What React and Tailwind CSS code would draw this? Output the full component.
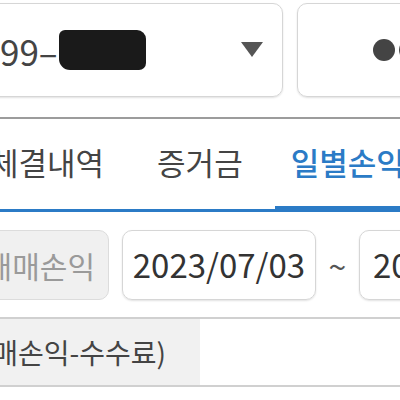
import React from "react";

const font = { fontFamily: '"Noto Sans CJK KR", "Noto Sans", sans-serif' };

function Triangle() {
  return (
    <svg width="22" height="16" viewBox="0 0 22 16" className="shrink-0">
      <polygon points="0,0 22,0 11,15" fill="#555555" />
    </svg>
  );
}

export default function App() {
  return (
    <div
      className="w-[400px] h-[400px] overflow-hidden bg-white text-[#444]"
      style={font}
    >
      {/* account selector row */}
      <div className="flex pt-[3px] gap-[14px]">
        <div className="-ml-[20px] w-[303px] h-[94px] shrink-0 flex items-center border border-[#d6d6d6] rounded-[10px] shadow-[0_1px_2px_rgba(0,0,0,0.12)] pl-[19px] pr-[19px]">
          <div className="flex-1 flex items-center">
            <span className="text-[35px] leading-none whitespace-nowrap">99–</span>
            <span className="inline-block w-[87px] h-[40px] bg-[#1a1a1a] rounded-[6px_9px_7px_11px] ml-[1px] shrink-0" />
          </div>
          <Triangle />
        </div>
        <div className="w-[200px] h-[94px] shrink-0 flex items-center gap-[4px] pl-[75px] border border-[#d6d6d6] rounded-[10px] shadow-[0_1px_2px_rgba(0,0,0,0.12)]">
          <span className="w-[22px] h-[22px] rounded-full bg-[#444] shrink-0" />
          <span className="w-[22px] h-[22px] rounded-full bg-[#444] shrink-0" />
        </div>
      </div>

      <div className="mt-[20px] h-[2px] bg-[#9c9c9c]" />

      {/* tabs */}
      <div className="flex items-center h-[87px] -ml-[10px] text-[31px] whitespace-nowrap">
        <span className="text-[#444]">체결내역</span>
        <span className="ml-[53px] text-[#444]">증거금</span>
        <span className="ml-[48px] text-[#2b7bc6] font-medium">일별손익</span>
      </div>
      <div className="flex items-end">
        <div className="w-[275px] h-[3px] bg-[#2b7bc6]" />
        <div className="flex-1 h-[6px] bg-[#2b7bc6]" />
      </div>

      {/* date filter row */}
      <div className="flex items-center mt-[18px] h-[70px] whitespace-nowrap">
        <div className="-ml-[20px] w-[129px] h-[70px] shrink-0 flex items-center justify-end pr-[13px] overflow-hidden bg-[#f0f0f0] border border-[#dcdcdc] rounded-[10px] text-[30px] text-[#9a9a9a]">
          매매손익
        </div>
        <div className="ml-[13px] w-[194px] h-[70px] shrink-0 flex items-center justify-center border border-[#d6d6d6] rounded-[10px] shadow-[0_1px_2px_rgba(0,0,0,0.12)] text-[33px] text-[#333]">
          2023/07/03
        </div>
        <span className="w-[43px] shrink-0 text-center text-[32px] text-[#555]">~</span>
        <div className="w-[194px] h-[70px] shrink-0 flex items-center pl-[13px] border border-[#d6d6d6] rounded-[10px] shadow-[0_1px_2px_rgba(0,0,0,0.12)] text-[33px] text-[#333]">
          2023/07/07
        </div>
      </div>

      {/* summary table */}
      <div className="mt-[17px] flex h-[70px] border-y-2 border-[#d0d0d0]">
        <div className="w-[200px] shrink-0 flex items-center justify-end pr-[34px] overflow-hidden bg-[#f1f1f1] text-[28px] text-[#444] whitespace-nowrap">
          순손익(매매손익-수수료)
        </div>
        <div className="flex-1 bg-white" />
      </div>
    </div>
  );
}
